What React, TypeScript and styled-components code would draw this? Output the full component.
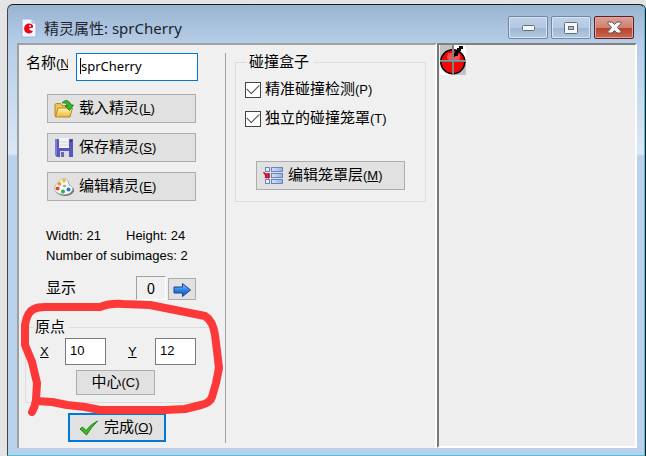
import React from "react";
import styled, { createGlobalStyle } from "styled-components";

const GlobalStyle = createGlobalStyle`
  * { box-sizing: border-box; }
  body {
    margin: 0;
    background: #e4e4e4;
    color: #000;
    font: 15px/20px "Liberation Sans", "Noto Sans CJK SC", sans-serif;
  }
  button, input, fieldset, legend { font: inherit; color: inherit; margin: 0; }
`;

const Desktop = styled.div`
  display: flex;
  min-height: 100vh;
  padding: 4px 1px 0 7px;
`;

const Window = styled.main`
  flex: 1;
  display: flex;
  flex-direction: column;
  padding: 0 7px 7px 9px;
  border: 1px solid #45c4dc;
  border-top-color: #1c1c1c;
  border-left-color: #3c444c;
  border-radius: 6px 6px 0 0;
  box-shadow: 1px 0 0 #101418;
  background: linear-gradient(#99b4d1 0, #b6cde7 38px, #dae8f6 149px, #b9d1ea 151px, #b9d1ea 100%);
`;

const TitleBar = styled.header`
  display: flex;
  align-items: center;
  height: 38px;
  padding: 7px 3px 0 4px;
`;

const Title = styled.h1`
  flex: 1;
  margin: 0 0 0 7px;
  font: 400 15px/22px "Noto Sans", "Noto Sans CJK SC", sans-serif;
  color: #1c232c;
`;

const CaptionButtons = styled.div`
  display: flex;
  gap: 3px;
`;

const CaptionButton = styled.button<{ $close?: boolean }>`
  display: grid;
  place-items: center;
  width: 40px;
  height: 23px;
  padding: 0;
  border: 1px solid ${(p) => (p.$close ? "#5c1f28" : "#7187a5")};
  border-radius: 2px;
  box-shadow: inset 0 0 0 1px ${(p) => (p.$close ? "#e0a59b" : "#d6e4f3")};
  background: ${(p) =>
    p.$close
      ? "linear-gradient(#dda093 0, #d07f70 50%, #b9412b 51%, #cb6650 100%)"
      : "linear-gradient(#bed1e7 0, #b4c9e2 50%, #9db6d3 51%, #b3c9e2 100%)"};
`;

const Body = styled.div`
  flex: 1;
  display: grid;
  grid-template-columns: 420px minmax(0, 1fr);
`;

const FormPane = styled.form`
  display: flex;
  background: #f0f0f0;
  border: solid #a0a0a0;
  border-width: 2px 0 0 2px;
  border-right: 2px solid #fff;
`;

const PreviewPane = styled.section`
  padding: 0 0 0 1px;
  background: #efefef;
  border: 2px solid;
  border-color: #808080 #fff #fff #787878;
`;

const Column = styled.div`
  width: 206px;
  padding-top: 8px;
`;

const Divider = styled.div`
  width: 1px;
  margin: 8px 0 5px;
  background: #a0a0a0;
`;

const OptionsColumn = styled.div`
  flex: 1;
  padding: 7px 9px 0;
`;

const NameRow = styled.div`
  display: flex;
  gap: 8px;
  padding-left: 7px;
`;

const NameLabel = styled.label`
  width: 42px;
  overflow: hidden;
  white-space: nowrap;
`;

const NameField = styled.div`
  position: relative;
  &::after {
    content: "";
    position: absolute;
    left: 4px;
    top: 5px;
    width: 1px;
    height: 16px;
    background: #000;
  }
`;

const NameInput = styled.input`
  display: block;
  width: 122px;
  height: 28px;
  padding: 0 4px 2px;
  border: 1px solid #0078d7;
  border-radius: 0;
  background: #fff;
  outline: none;
  font: 13px "Noto Sans", "Noto Sans CJK SC", sans-serif;
`;

const ButtonStack = styled.div`
  display: grid;
  gap: 10px;
  width: 149px;
  margin: 13px 0 0 28px;
`;

const PushButton = styled.button<{ $wide?: boolean }>`
  display: flex;
  align-items: center;
  gap: 5px;
  width: ${(p) => (p.$wide ? "149px" : "auto")};
  height: 29px;
  padding: 0 6px;
  border: 1px solid #adadad;
  background: #e1e1e1;
  line-height: 20px;
  white-space: nowrap;
`;

const DoneButton = styled(PushButton)`
  width: 98px;
  margin: 10px 0 0 49px;
  padding: 0 9px;
  border: 2px solid #0078d7;
`;

const CenterButton = styled(PushButton)`
  justify-content: center;
  width: 79px;
  height: 25px;
  margin: 5px 0 0 50px;
  padding: 0;
`;

const KeyHint = styled.span`
  font-size: 13px;
`;

const Info = styled.div`
  margin: 25px 0 0 27px;
  font-size: 13px;
  line-height: 20px;
`;

const InfoRow = styled.div`
  display: grid;
  grid-template-columns: 80px 1fr;
`;

const ShowRow = styled.div`
  display: flex;
  align-items: flex-end;
  gap: 2px;
  margin: 10px 0 0 27px;
`;

const ShowLabel = styled.span`
  width: 88px;
  line-height: 24px;
`;

const Frame = styled.output`
  width: 30px;
  height: 24px;
  border: 1px solid;
  border-color: #a0a0a0 #fff #fff #a0a0a0;
  text-align: center;
  font: 15px/22px "Noto Sans CJK SC", sans-serif;
`;

const NextButton = styled(PushButton)`
  width: 28px;
  height: 22px;
  padding: 0 3px;
`;

const Group = styled.fieldset`
  min-width: 0;
  padding: 0;
  border: 1px solid #dcdcdc;
  legend {
    margin-left: 8px;
    padding: 0 4px 0 1px;
    line-height: 18px;
  }
`;

const Marked = styled.div`
  position: relative;
  width: 190px;
  margin: 18px 0 0 6px;
`;

const Annotation = styled.svg`
  position: absolute;
  left: -10px;
  top: -24px;
  pointer-events: none;
`;

const OriginGroup = styled(Group)`
  padding-bottom: 7px;
`;

const OriginRow = styled.div`
  display: grid;
  grid-template-columns: 25px 41px 22px 27px 41px;
  align-items: center;
  padding: 2px 0 0 14px;
  font-size: 13px;
  label { text-decoration: underline; }
  label:nth-of-type(2) { grid-column: 4; }
`;

const NumberInput = styled.input`
  width: 41px;
  height: 27px;
  padding: 0 4px 3px;
  border: 1px solid #7a7a7a;
  border-radius: 0;
  background: #fff;
`;

const CollisionGroup = styled(Group)`
  height: 150px;
  legend {
    margin-left: 11px;
    padding: 0 5px 0 2px;
    line-height: 20px;
  }
`;

const Options = styled.div`
  display: grid;
  gap: 8px;
  padding: 7px 0 0 9px;
`;

const Option = styled.div`
  display: flex;
  align-items: center;
  gap: 4px;
`;

const Check = styled.input`
  appearance: none;
  display: grid;
  place-items: center;
  width: 16px;
  height: 16px;
  border: 1px solid #444;
  background: #fff;
  &:checked::before {
    content: "";
    width: 11px;
    height: 6px;
    margin-bottom: 4px;
    border: solid #505050;
    border-width: 0 0 1px 1px;
    transform: rotate(-45deg);
  }
`;

const MaskSlot = styled.div`
  padding: 32px 0 0 20px;
`;

const Sprite = styled.svg`
  display: block;
`;

function AppIcon() {
  return (
    <svg width="16" height="20" viewBox="0 0 16 20" aria-hidden="true">
      <path d="M1 1h10l4 4v14H1z" fill="#f4f8ff" stroke="#9db4e2" />
      <path d="M11 1v4h4" fill="#c5d6f5" stroke="#9db4e2" />
      <path d="M12 7.4A5 5 0 1 0 12 13.6L8.4 11.8 8 10.6l4-1.2z" fill="#f00514" />
      <circle cx="9" cy="8" r="1" fill="#fff" />
    </svg>
  );
}

function FolderIcon() {
  return (
    <svg width="20" height="20" viewBox="0 0 20 20" aria-hidden="true">
      <defs>
        <linearGradient id="folder" x1="0" y1="0" x2="0" y2="1">
          <stop offset="0" stopColor="#fff5b4" />
          <stop offset="1" stopColor="#edb634" />
        </linearGradient>
      </defs>
      <path d="M1 17V6q0-1.500 1.500-1.500h4L8 6.500h7q1 0 1 1V17z" fill="#efc34f" stroke="#b58a2c" />
      <path d="M1.500 18 4 9h14.500L16 18z" fill="url(#folder)" stroke="#b58a2c" strokeLinejoin="round" />
      <path d="M8 4q5-6 9.500 2h2l-4 5.500L11 7h2.500Q12 3 8 4z" fill="#36b52c" stroke="#137518" strokeWidth=".8" />
    </svg>
  );
}

function SaveIcon() {
  return (
    <svg width="20" height="20" viewBox="0 0 20 20" aria-hidden="true">
      <path d="M1 1h18v18H3l-2-2z" fill="#5757bd" />
      <path d="M1 1h2v16H1z" fill="#7c7cdb" />
      <path d="M5 0h10v10H5z" fill="#f3f3f5" />
      <path d="M5 4h10M5 7h10" stroke="#d4d4dc" />
      <path d="M6 13h9v6H6z" fill="#d9dae3" />
      <path d="M7 14h3v5H7z" fill="#6a6aa8" />
      <path d="M16 2h2v2h-2z" fill="#393992" />
    </svg>
  );
}

function PaletteIcon() {
  return (
    <svg width="20" height="20" viewBox="0 0 20 20" aria-hidden="true">
      <path
        d="M2 8.500Q5 7 5.500 5.500 7 1 11 2.500q4 1 4 4Q15 8 18 10q3 2 2 4.500-3 4.500-9 4.500-7-.5-10-5-1-3.500 1-5.500z"
        fill="#6f757d"
      />
      <path
        d="M2 7.500Q5 6 5.500 4 7 .8 11 1.500q3.500 1 3.500 4.500 0 2 2 3 3 1.500 2 4-2 4.500-8.500 4.500Q3 17 .8 13.500.3 9.500 2 7.500z"
        fill="#f8f8f6"
        stroke="#a9abae"
        strokeWidth=".7"
      />
      <circle cx="10" cy="3.700" r="1.900" fill="#e9c53a" />
      <circle cx="5.500" cy="6.800" r="1.900" fill="#ec992b" />
      <circle cx="3.600" cy="11.400" r="2" fill="#e84432" />
      <circle cx="9" cy="14.400" r="2" fill="#35ac35" />
      <circle cx="14.500" cy="12.400" r="2" fill="#2874d4" />
      <ellipse cx="10.500" cy="9" rx="1.700" ry="1.200" fill="#a2a5a9" />
    </svg>
  );
}

function MaskIcon() {
  return (
    <svg width="20" height="20" viewBox="0 0 20 20" aria-hidden="true">
      <defs>
        <linearGradient id="bar">
          <stop offset="0" stopColor="#c9e6fc" />
          <stop offset="1" stopColor="#8fb4ea" />
        </linearGradient>
      </defs>
      {[1.5, 7.5, 13.5].map((y) => (
        <g key={y} stroke="#7680b8">
          <rect x="2.500" y={y} width="4" height="4" fill="#e4effc" />
          <rect x="8.500" y={y} width="11" height="4" fill="url(#bar)" />
        </g>
      ))}
      <path d="M.5 6.500q1.500 0 3 2l2.500-1v4.500l-4-.5 1-1Q2 8.500.5 6.500z" fill="#e41c25" stroke="#c4101c" />
    </svg>
  );
}

function ArrowIcon() {
  return (
    <svg width="20" height="16" viewBox="0 0 20 16" aria-hidden="true">
      <defs>
        <linearGradient id="arrow" x1="0" y1="0" x2="0" y2="1">
          <stop offset="0" stopColor="#8cc5ff" />
          <stop offset=".55" stopColor="#287fe2" />
          <stop offset="1" stopColor="#1c5dc3" />
        </linearGradient>
      </defs>
      <path d="M2 6h8.500V2.500l8 6.500-8 6.500V12H2z" fill="url(#arrow)" stroke="#173f92" strokeLinejoin="round" />
    </svg>
  );
}

function TickIcon() {
  return (
    <svg width="20" height="16" viewBox="0 0 20 16" aria-hidden="true">
      <path d="M1 9l2.500-2L7 10.500Q12 4 18.500 1 12 7.500 7.500 15z" fill="#42b52c" stroke="#208318" strokeLinejoin="round" />
    </svg>
  );
}

function Hint({ letter, plain }: { letter: string; plain?: boolean }) {
  return <KeyHint>({plain ? letter : <u>{letter}</u>})</KeyHint>;
}

function CherrySprite() {
  return (
    <Sprite width="26" height="30" viewBox="0 0 26 30" role="img" aria-label="sprCherry">
      <path d="M0 0h26v30H0z" fill="#fff" />
      <path d="M0 0h13v16H0zM13 16h13v14H13z" fill="#c3c3c3" />
      <circle cx="12.800" cy="16.800" r="12" fill="#f50505" stroke="#000" strokeWidth="1.600" />
      <path d="M8 8h9l3 2v4l-3 2H9l-2-3z" fill="#ff4d4d" />
      <g shapeRendering="crispEdges">
        <path d="M19 1h4v3h-2v2h-2v2h-1v3h-3v1h-2V8h2V6h2V3h2z" fill="#000" />
        <path d="M12 0h2v30h-2z" fill="#7f8686" />
        <path d="M0 15h26v1H0z" fill="#43b5b0" />
        <path d="M0 16h26v1H0z" fill="#7f8080" />
      </g>
    </Sprite>
  );
}

export default function App() {
  return (
    <Desktop>
      <GlobalStyle />
      <Window>
        <TitleBar>
          <AppIcon />
          <Title>精灵属性: sprCherry</Title>
          <CaptionButtons>
            <CaptionButton aria-label="最小化">
              <svg width="15" height="7" viewBox="0 0 15 7">
                <rect x="1.500" y="1.500" width="12" height="5" rx="1" fill="#f6f6f6" stroke="#656d79" />
              </svg>
            </CaptionButton>
            <CaptionButton aria-label="最大化">
              <svg width="14" height="12" viewBox="0 0 14 12">
                <rect x=".5" y=".5" width="13" height="11" rx="1" fill="#f6f6f6" stroke="#656d79" />
                <rect x="4.500" y="4.500" width="5" height="3" fill="#a5bad5" stroke="#656d79" />
              </svg>
            </CaptionButton>
            <CaptionButton $close aria-label="关闭">
              <svg width="15" height="13" viewBox="0 0 15 13">
                <path
                  d="M1 1h4l2.500 2.500L10 1h4v1.500L10.500 6.500 14 10.500V12h-4L7.500 9.500 5 12H1v-1.500l3.500-4L1 2.500z"
                  fill="#f8f8f8"
                  stroke="#65555c"
                />
              </svg>
            </CaptionButton>
          </CaptionButtons>
        </TitleBar>
        <Body>
          <FormPane onSubmit={(e) => e.preventDefault()}>
            <Column>
              <NameRow>
                <NameLabel htmlFor="name">
                  名称<Hint letter="N" />
                </NameLabel>
                <NameField>
                  <NameInput id="name" type="text" defaultValue="sprCherry" />
                </NameField>
              </NameRow>
              <ButtonStack>
                <PushButton type="button">
                  <FolderIcon />
                  <span>载入精灵<Hint letter="L" /></span>
                </PushButton>
                <PushButton type="button">
                  <SaveIcon />
                  <span>保存精灵<Hint letter="S" /></span>
                </PushButton>
                <PushButton type="button">
                  <PaletteIcon />
                  <span>编辑精灵<Hint letter="E" /></span>
                </PushButton>
              </ButtonStack>
              <Info>
                <InfoRow>
                  <span>Width: 21</span>
                  <span>Height: 24</span>
                </InfoRow>
                <div>Number of subimages: 2</div>
              </Info>
              <ShowRow>
                <ShowLabel>显示</ShowLabel>
                <Frame>0</Frame>
                <NextButton type="button" aria-label="下一帧">
                  <ArrowIcon />
                </NextButton>
              </ShowRow>
              <Marked>
                <OriginGroup>
                  <legend>原点</legend>
                  <OriginRow>
                    <label htmlFor="origin-x">X</label>
                    <NumberInput id="origin-x" type="text" defaultValue="10" />
                    <label htmlFor="origin-y">Y</label>
                    <NumberInput id="origin-y" type="text" defaultValue="12" />
                  </OriginRow>
                  <CenterButton type="button">
                    <span>中心<Hint letter="C" plain /></span>
                  </CenterButton>
                </OriginGroup>
                <Annotation width="215" height="130" viewBox="15 294 215 130" aria-hidden="true">
                  <path
                    d="M32 412Q35 407 36 400L37 383 32 362 25 345 25 325Q27 312 34 309 38 307 45 307L100 307Q110 303 123 304L150 305 170 309 190 313 205 316Q213 321 215 335L217 351 219 368 216 383 212 397Q210 403 201 405L185 409 165 410 100 410 85 407 67 405 52 402 36 401"
                    fill="none"
                    stroke="#fc3838"
                    strokeWidth="8"
                    strokeLinecap="round"
                    strokeLinejoin="round"
                  />
                </Annotation>
              </Marked>
              <DoneButton type="submit">
                <TickIcon />
                <span>完成<Hint letter="O" /></span>
              </DoneButton>
            </Column>
            <Divider />
            <OptionsColumn>
              <CollisionGroup>
                <legend>碰撞盒子</legend>
                <Options>
                  <Option>
                    <Check id="precise" type="checkbox" defaultChecked />
                    <label htmlFor="precise">精准碰撞检测<Hint letter="P" plain /></label>
                  </Option>
                  <Option>
                    <Check id="separate" type="checkbox" defaultChecked />
                    <label htmlFor="separate">独立的碰撞笼罩<Hint letter="T" plain /></label>
                  </Option>
                </Options>
                <MaskSlot>
                  <PushButton type="button" $wide>
                    <MaskIcon />
                    <span>编辑笼罩层<Hint letter="M" /></span>
                  </PushButton>
                </MaskSlot>
              </CollisionGroup>
            </OptionsColumn>
          </FormPane>
          <PreviewPane>
            <CherrySprite />
          </PreviewPane>
        </Body>
      </Window>
    </Desktop>
  );
}
